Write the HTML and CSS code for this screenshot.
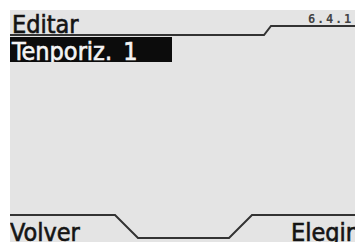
FILE: index.html
```html
<!DOCTYPE html>
<html lang="es">
<head>
<meta charset="utf-8">
<link rel="stylesheet" href="styles.css">
</head>
<body>
<div class="screen">
  <div class="header">
    <svg class="frame" width="345" height="27" viewBox="0 0 345 27">
      <polyline points="0,25 254,25 261,16 345,16" />
    </svg>
    <span class="title">Editar</span>
    <span class="version">6.4.1</span>
  </div>
  <div class="list">
    <div class="item selected">Tenporiz. 1</div>
  </div>
  <div class="footer">
    <svg class="frame" width="345" height="32" viewBox="0 0 345 32">
      <polyline points="0,5 105,5 128,28 219,28 242,5 345,5" />
    </svg>
    <span class="softkey">Volver</span>
    <span class="softkey">Elegir</span>
  </div>
</div>
</body>
</html>
```
FILE: styles.css
```css
html, body {
  margin: 0;
  padding: 0;
  background: #ffffff;
}
body {
  width: 359px;
  height: 242px;
  overflow: hidden;
}
.screen {
  margin: 10px 0 0 10px;
  width: 345px;
  height: 232px;
  background: #e4e4e4;
  display: flex;
  flex-direction: column;
  overflow: hidden;
  font-family: "DejaVu Sans Condensed", "DejaVu Sans", sans-serif;
  font-stretch: condensed;
  color: #141414;
  -webkit-text-stroke: 0.6px currentColor;
}
.header {
  position: relative;
  height: 27px;
  flex: none;
  display: flex;
  justify-content: space-between;
  align-items: flex-start;
}
.frame {
  position: absolute;
  left: 0;
  top: 0;
  fill: none;
  stroke: #333333;
  stroke-width: 2;
}
.title {
  font-size: 25px;
  line-height: 25px;
  margin-top: 2px;
  padding-left: 2px;
}
.version {
  font-family: "DejaVu Sans Mono", monospace;
  font-stretch: normal;
  font-weight: bold;
  font-size: 12px;
  line-height: 12px;
  margin-top: 3px;
  margin-right: 2px;
  letter-spacing: 1.8px;
  color: #444;
  -webkit-text-stroke: 0;
}
.list {
  flex: 1;
}
.item {
  font-size: 25px;
  line-height: 24px;
  height: 22px;
  padding-top: 3px;
  padding-left: 2px;
  overflow: hidden;
  white-space: pre;
  word-spacing: 4px;
}
.selected {
  width: 160px;
  background: #0c0c0c;
  color: #f4f4f4;
}
.footer {
  position: relative;
  height: 32px;
  flex: none;
  display: flex;
  justify-content: space-between;
  align-items: flex-start;
}
.softkey {
  font-size: 25px;
  line-height: 25px;
  margin-top: 10px;
}
```
